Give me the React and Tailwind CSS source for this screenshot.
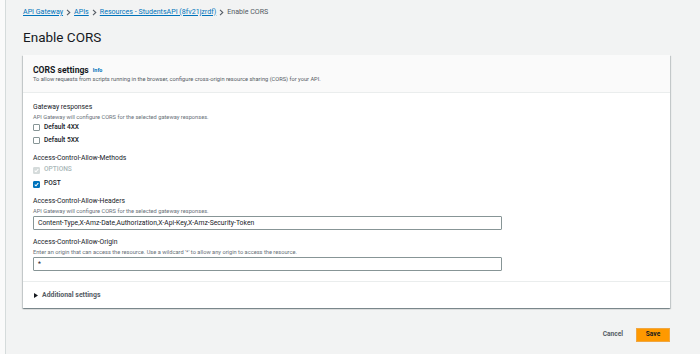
import React from "react";

const font = { fontFamily: "Roboto, 'Liberation Sans', sans-serif" };

function Chevron() {
  return (
    <svg width="5" height="7" viewBox="0 0 5 7" className="mx-[3px]">
      <path d="M1 0.8 L3.8 3.5 L1 6.2" fill="none" stroke="#545b64" strokeWidth="1.1" />
    </svg>
  );
}

function Check({ checked, disabled }) {
  const bg = disabled ? "bg-[#d5dbdb] border-[#d5dbdb]" : checked ? "bg-[#0073bb] border-[#0073bb]" : "bg-white border-[#879596]";
  return (
    <span className={`w-[7px] h-[7px] border rounded-[1px] flex items-center justify-center ${bg}`}>
      {checked && (
        <svg width="5" height="5" viewBox="0 0 5 5">
          <path d="M0.7 2.6 L2 3.8 L4.3 1" fill="none" stroke="white" strokeWidth="1.1" />
        </svg>
      )}
    </span>
  );
}

function CheckRow({ label, checked, disabled, h }) {
  return (
    <div className={`flex items-center gap-[4px] ${h}`}>
      <Check checked={checked} disabled={disabled} />
      <span className={`text-[6.6px] font-medium ${disabled ? "text-[#aab7b8]" : "text-[#16191f]"}`}>
        {label}
      </span>
    </div>
  );
}

function Label({ children }) {
  return <div className="h-[10px] flex items-center text-[6.8px] text-[#16191f]">{children}</div>;
}

function Desc({ children }) {
  return <div className="h-[8px] flex items-center text-[5.7px] text-[#687078] mt-[1px]">{children}</div>;
}

function Field({ value }) {
  return (
    <div className="w-[469px] h-[14px] border border-[#879596] rounded-[1px] bg-white flex items-center px-[4px] text-[6.8px] text-[#16191f]">
      {value}
    </div>
  );
}

export default function App() {
  return (
    <div className="flex w-[700px] h-[354px] bg-[#f2f3f3] overflow-hidden" style={font}>
      <div className="w-[6px] bg-[#fafafa] border-r border-[#d5dbdb]" />
      <div className="flex-1 pl-[17px] pr-[30px] pt-[7px]">
        <nav className="h-[10px] flex items-center text-[7.1px]">
          <a className="text-[#0073bb] underline">API Gateway</a>
          <Chevron />
          <a className="text-[#0073bb] underline">APIs</a>
          <Chevron />
          <a className="text-[#0073bb] underline">Resources - StudentsAPI (8fv21jzrdf)</a>
          <Chevron />
          <span className="text-[#545b64]">Enable CORS</span>
        </nav>
        <h1 className="mt-[11px] h-[18px] flex items-center text-[13.5px] text-[#16191f]">Enable CORS</h1>

        <div className="mt-[9px] bg-white shadow-[0_1px_1px_0_rgba(0,28,36,0.3),1px_1px_1px_0_rgba(0,28,36,0.15),-1px_1px_1px_0_rgba(0,28,36,0.15)]">
          <div className="h-[38px] bg-[#fafafa] border-b border-[#eaeded] px-[10px] pt-[10px]">
            <div className="h-[10px] flex items-center gap-[4px]">
              <span className="text-[8.6px] font-bold text-[#16191f]">CORS settings</span>
              <span className="text-[5.4px] font-bold text-[#0073bb] mt-[1px]">Info</span>
            </div>
            <div className="h-[7px] mt-[1px] flex items-center text-[5.7px] text-[#545b64]">
              To allow requests from scripts running in the browser, configure cross-origin resource sharing (CORS) for your API.
            </div>
          </div>

          <div className="px-[10px] pt-[9px] pb-[10px] border-b border-[#eaeded]">
            <Label>Gateway responses</Label>
            <Desc>API Gateway will configure CORS for the selected gateway responses.</Desc>
            <div>
              <CheckRow label="Default 4XX" h="h-[13px]" />
              <CheckRow label="Default 5XX" h="h-[13px]" />
            </div>
            <div className="mt-[6px]">
              <Label>Access-Control-Allow-Methods</Label>
            </div>
            <CheckRow label="OPTIONS" checked disabled h="h-[14px]" />
            <CheckRow label="POST" checked h="h-[14px]" />

            <div className="mt-[5px]">
              <Label>Access-Control-Allow-Headers</Label>
            </div>
            <Desc>API Gateway will configure CORS for the selected gateway responses.</Desc>
            <div className="mt-[1px]">
              <Field value="Content-Type,X-Amz-Date,Authorization,X-Api-Key,X-Amz-Security-Token" />
            </div>

            <div className="mt-[7px]">
              <Label>Access-Control-Allow-Origin</Label>
            </div>
            <Desc>Enter an origin that can access the resource. Use a wildcard '*' to allow any origin to access the resource.</Desc>
            <div className="mt-[1px]">
              <Field value="*" />
            </div>
          </div>

          <div className="h-[26px] px-[11px] flex items-center gap-[4px]">
            <svg width="4" height="5" viewBox="0 0 4 5">
              <path d="M0 0 L4 2.5 L0 5 Z" fill="#16191f" />
            </svg>
            <span className="text-[6.9px] font-bold text-[#545b64]">Additional settings</span>
          </div>
        </div>

        <div className="mt-[20px] flex justify-end items-center gap-[13px]">
          <button className="text-[6.6px] font-bold text-[#545b64]">Cancel</button>
          <button className="h-[14px] w-[34px] bg-[#ff9900] border border-[#f0a640] text-[6.6px] font-bold text-[#16191f]">
            Save
          </button>
        </div>
      </div>
    </div>
  );
}
